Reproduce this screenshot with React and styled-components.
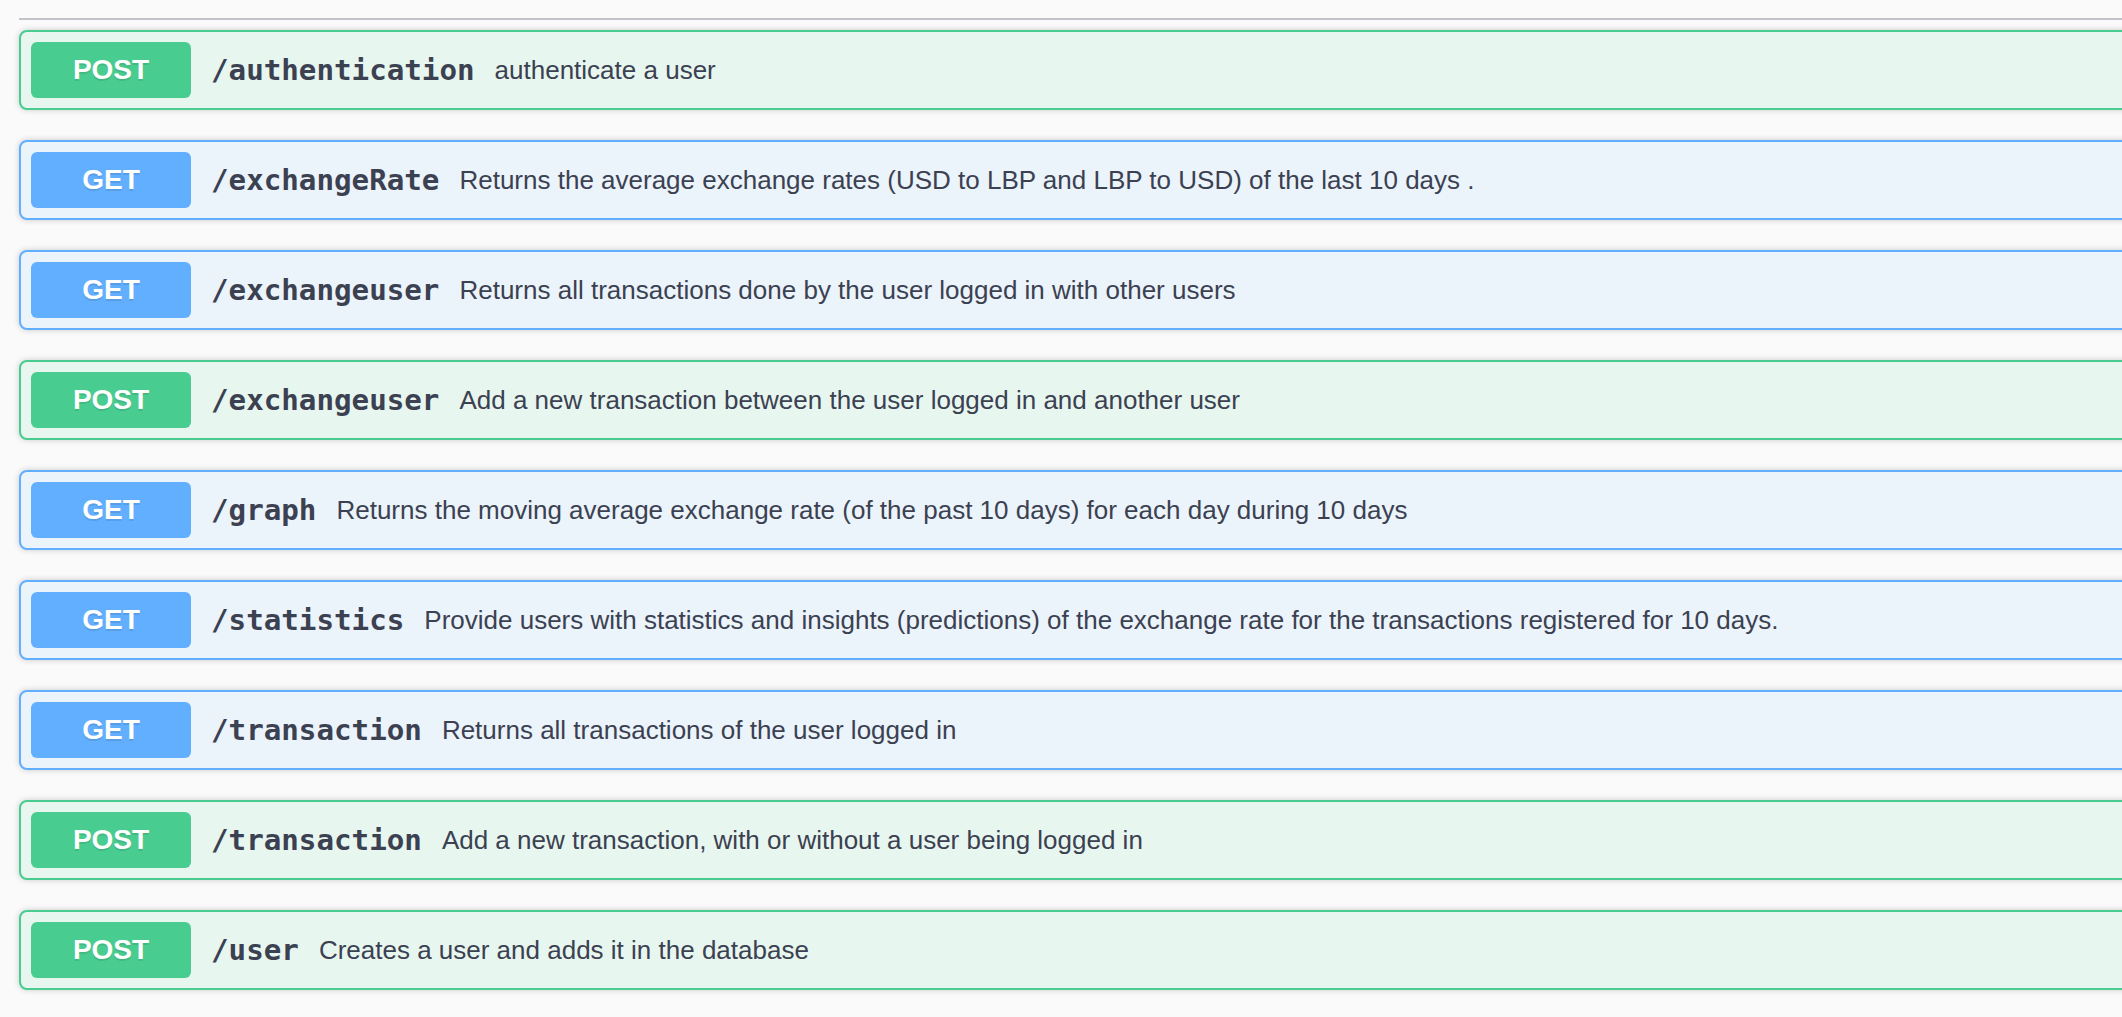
import React from 'react'
import styled, { createGlobalStyle } from 'styled-components'

const GlobalStyle = createGlobalStyle`
  html, body {
    margin: 0;
    padding: 0;
    background: #fafafa;
    overflow: hidden;
  }
`

const COLORS = {
  POST: { main: '#49cc90', bg: '#e8f6f0' },
  GET: { main: '#61affe', bg: '#ebf3fb' },
}

const endpoints = [
  { method: 'POST', path: '/authentication', desc: 'authenticate a user' },
  { method: 'GET', path: '/exchangeRate', desc: 'Returns the average exchange rates (USD to LBP and LBP to USD) of the last 10 days .' },
  { method: 'GET', path: '/exchangeuser', desc: 'Returns all transactions done by the user logged in with other users' },
  { method: 'POST', path: '/exchangeuser', desc: 'Add a new transaction between the user logged in and another user' },
  { method: 'GET', path: '/graph', desc: 'Returns the moving average exchange rate (of the past 10 days) for each day during 10 days' },
  { method: 'GET', path: '/statistics', desc: 'Provide users with statistics and insights (predictions) of the exchange rate for the transactions registered for 10 days.' },
  { method: 'GET', path: '/transaction', desc: 'Returns all transactions of the user logged in' },
  { method: 'POST', path: '/transaction', desc: 'Add a new transaction, with or without a user being logged in' },
  { method: 'POST', path: '/user', desc: 'Creates a user and adds it in the database' },
]

const Page = styled.div`
  width: 2200px;
  padding: 18px 0 0 19px;
  box-sizing: border-box;
`

const Divider = styled.div`
  height: 2px;
  background: #c2c3c8;
  margin-bottom: 10px;
`

const Block = styled.div`
  display: flex;
  align-items: center;
  padding: 10px;
  margin-bottom: 30px;
  border: 2px solid ${p => COLORS[p.$method].main};
  background: ${p => COLORS[p.$method].bg};
  border-radius: 8px;
  box-shadow: 0 0 6px rgba(0, 0, 0, 0.19);
`

const Method = styled.span`
  flex: none;
  width: 160px;
  height: 56px;
  display: flex;
  align-items: center;
  justify-content: center;
  border-radius: 6px;
  background: ${p => COLORS[p.$method].main};
  color: #fff;
  font-family: "Liberation Sans", Arial, sans-serif;
  font-weight: 700;
  font-size: 28px;
  text-shadow: 0 2px 0 rgba(0, 0, 0, 0.1);
`

const Path = styled.span`
  padding: 0 20px;
  color: #3b4151;
  font-family: "DejaVu Sans Mono", "Liberation Mono", monospace;
  font-weight: 700;
  font-size: 29.2px;
  letter-spacing: 0;
  white-space: nowrap;
`

const Desc = styled.span`
  color: #3b4151;
  font-family: "Liberation Sans", Arial, sans-serif;
  font-size: 26px;
  white-space: nowrap;
`

export default function App() {
  return (
    <>
      <GlobalStyle />
      <Page>
        <Divider />
        {endpoints.map((e, i) => (
          <Block key={i} $method={e.method}>
            <Method $method={e.method}>{e.method}</Method>
            <Path>{e.path}</Path>
            <Desc>{e.desc}</Desc>
          </Block>
        ))}
      </Page>
    </>
  )
}
